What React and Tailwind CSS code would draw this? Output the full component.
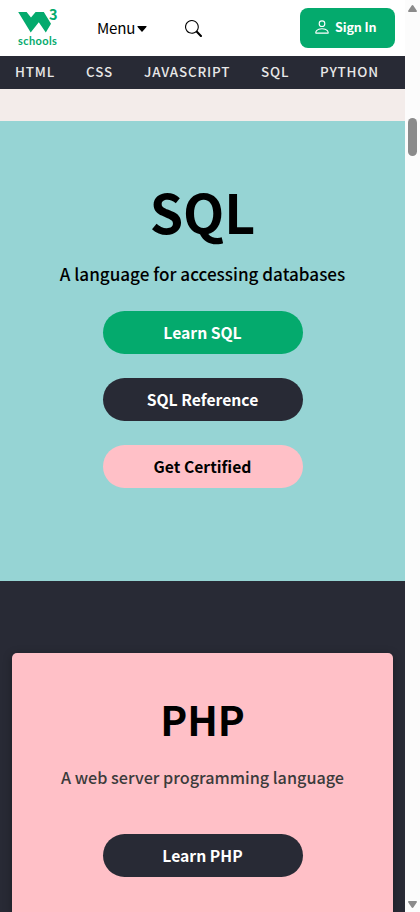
import { BsSearch, BsPerson } from "react-icons/bs";

const NAV = [
  { label: "HTML", className: "w-[71px]" },
  { label: "CSS", className: "w-[58px]" },
  { label: "JAVASCRIPT", className: "w-[117px]" },
  { label: "SQL", className: "w-[59px]" },
  { label: "PYTHON", className: "w-[70px]" },
];

function Logo() {
  return (
    <div className="relative h-[40px] w-[42px] shrink-0">
      <svg viewBox="0 0 42 40" className="absolute inset-0 h-full w-full" fill="#04aa6d">
        <path d="M.2 4H8.6L13 9.6L17.6 4H25.8L33 15.8L27.8 24.6L20.8 14.2L12.7 24.6Z" />
      </svg>
      <span className="absolute left-[31px] top-[-1px] text-[14.5px] font-bold leading-[14px] tracking-[-0.5px] text-[#04aa6d]">3</span>
      <span className="absolute left-0 top-[27px] font-['Lato',sans-serif] text-[11px] font-bold leading-[12px] tracking-[0.4px] text-[#04aa6d]">schools</span>
    </div>
  );
}

function PillButton({ children, className }) {
  return (
    <button className={"block h-[43px] w-[200px] rounded-[25px] text-[15.7px] font-bold leading-[41px] " + className}>
      {children}
    </button>
  );
}

function Scrollbar() {
  return (
    <div className="flex h-full w-[15px] shrink-0 flex-col items-start bg-[#fcfcfc] pl-[3px]">
      <svg viewBox="0 0 9 8" className="mt-[5px] h-[8px] w-[9px]" fill="#8b8b8b">
        <path d="M4.5 0Q5 0 5.5 .7L9 6Q9 7 8 7H1Q0 7 0 6L3.5 .7Q4 0 4.5 0Z" />
      </svg>
      <div className="mt-[105px] h-[38px] w-[9px] rounded-full bg-[#8b8b8b]" />
      <svg viewBox="0 0 9 8" className="mb-[3px] mt-auto h-[8px] w-[9px]" fill="#8b8b8b">
        <path d="M4.5 7Q5 7 5.5 6.3L9 1Q9 0 8 0H1Q0 0 0 1L3.5 6.3Q4 7 4.5 7Z" />
      </svg>
    </div>
  );
}

export default function App() {
  return (
    <div className="flex h-[912px] w-[420px] overflow-hidden bg-white font-['Noto_Sans_CJK_SC',sans-serif] text-black">
      <div className="flex min-w-0 flex-1 flex-col">
        <header className="flex h-[56px] shrink-0 items-start pl-[18px] pr-[10px] pt-[8px]">
          <Logo />
          <div className="ml-[37px] flex h-[40px] w-[88px] items-center">
            <span className="-mt-[2px] text-[15.1px] leading-[38px] tracking-[-0.2px]">Menu</span>
            <svg viewBox="0 0 10 6" className="ml-[2px] mt-[2px] h-[6px] w-[10px]" fill="#000">
              <path d="M.8 0H9.2Q10 .4 9.4 1L5.5 5.4Q5 6 4.5 5.4L.6 1Q0 .4 .8 0Z" />
            </svg>
          </div>
          <BsSearch className="mt-[12px] h-[17px] w-[17px]" />
          <button className="ml-auto flex h-[40px] w-[95px] items-start rounded-[8px] bg-[#04aa6d] pl-[13px] text-white">
            <BsPerson className="mt-[10px] h-[18px] w-[18px] shrink-0" />
            <span className="ml-[4px] whitespace-nowrap text-[12.6px] font-bold leading-[38px] tracking-[-0.15px]">Sign In</span>
          </button>
        </header>
        <nav className="flex h-[33px] shrink-0 overflow-hidden bg-[#282a35] pl-[15px] text-[13.4px] font-medium leading-[31px] tracking-[0.85px] text-[#e8e8e8]">
          {NAV.map((n) => (
            <a key={n.label} className={"shrink-0 whitespace-nowrap " + n.className}>{n.label}</a>
          ))}
        </nav>
        <div className="h-[32px] shrink-0 bg-[#f3ecea]" />
        <section className="flex h-[460px] shrink-0 flex-col items-center bg-[#96d4d4] pt-[60px]">
          <h1 className="text-[53.6px] font-bold leading-[60px]">SQL</h1>
          <p className="mt-[21px] whitespace-nowrap text-[17.1px] font-medium leading-[24px]">A language for accessing databases</p>
          <div className="mt-[25px] flex flex-col gap-[24px]">
            <PillButton className="bg-[#04aa6d] text-white">Learn SQL</PillButton>
            <PillButton className="bg-[#282a35] text-white">SQL Reference</PillButton>
            <PillButton className="bg-[#ffc0c7] text-black">Get Certified</PillButton>
          </div>
        </section>
        <section className="flex flex-1 flex-col bg-[#282a35] px-[12px] pt-[72px]">
          <div className="flex flex-1 flex-col items-center rounded-t-[5px] bg-[#ffc0c7] pt-[41px] shadow-[0_2px_10px_rgba(0,0,0,0.3)]">
            <h2 className="text-[40.5px] font-bold leading-[50px]">PHP</h2>
            <p className="mt-[21px] whitespace-nowrap text-[16.2px] font-medium leading-[24px] text-[#3b3b3b]">A web server programming language</p>
            <PillButton className="mt-[45px] bg-[#282a35] text-white">Learn PHP</PillButton>
          </div>
        </section>
      </div>
      <Scrollbar />
    </div>
  );
}
